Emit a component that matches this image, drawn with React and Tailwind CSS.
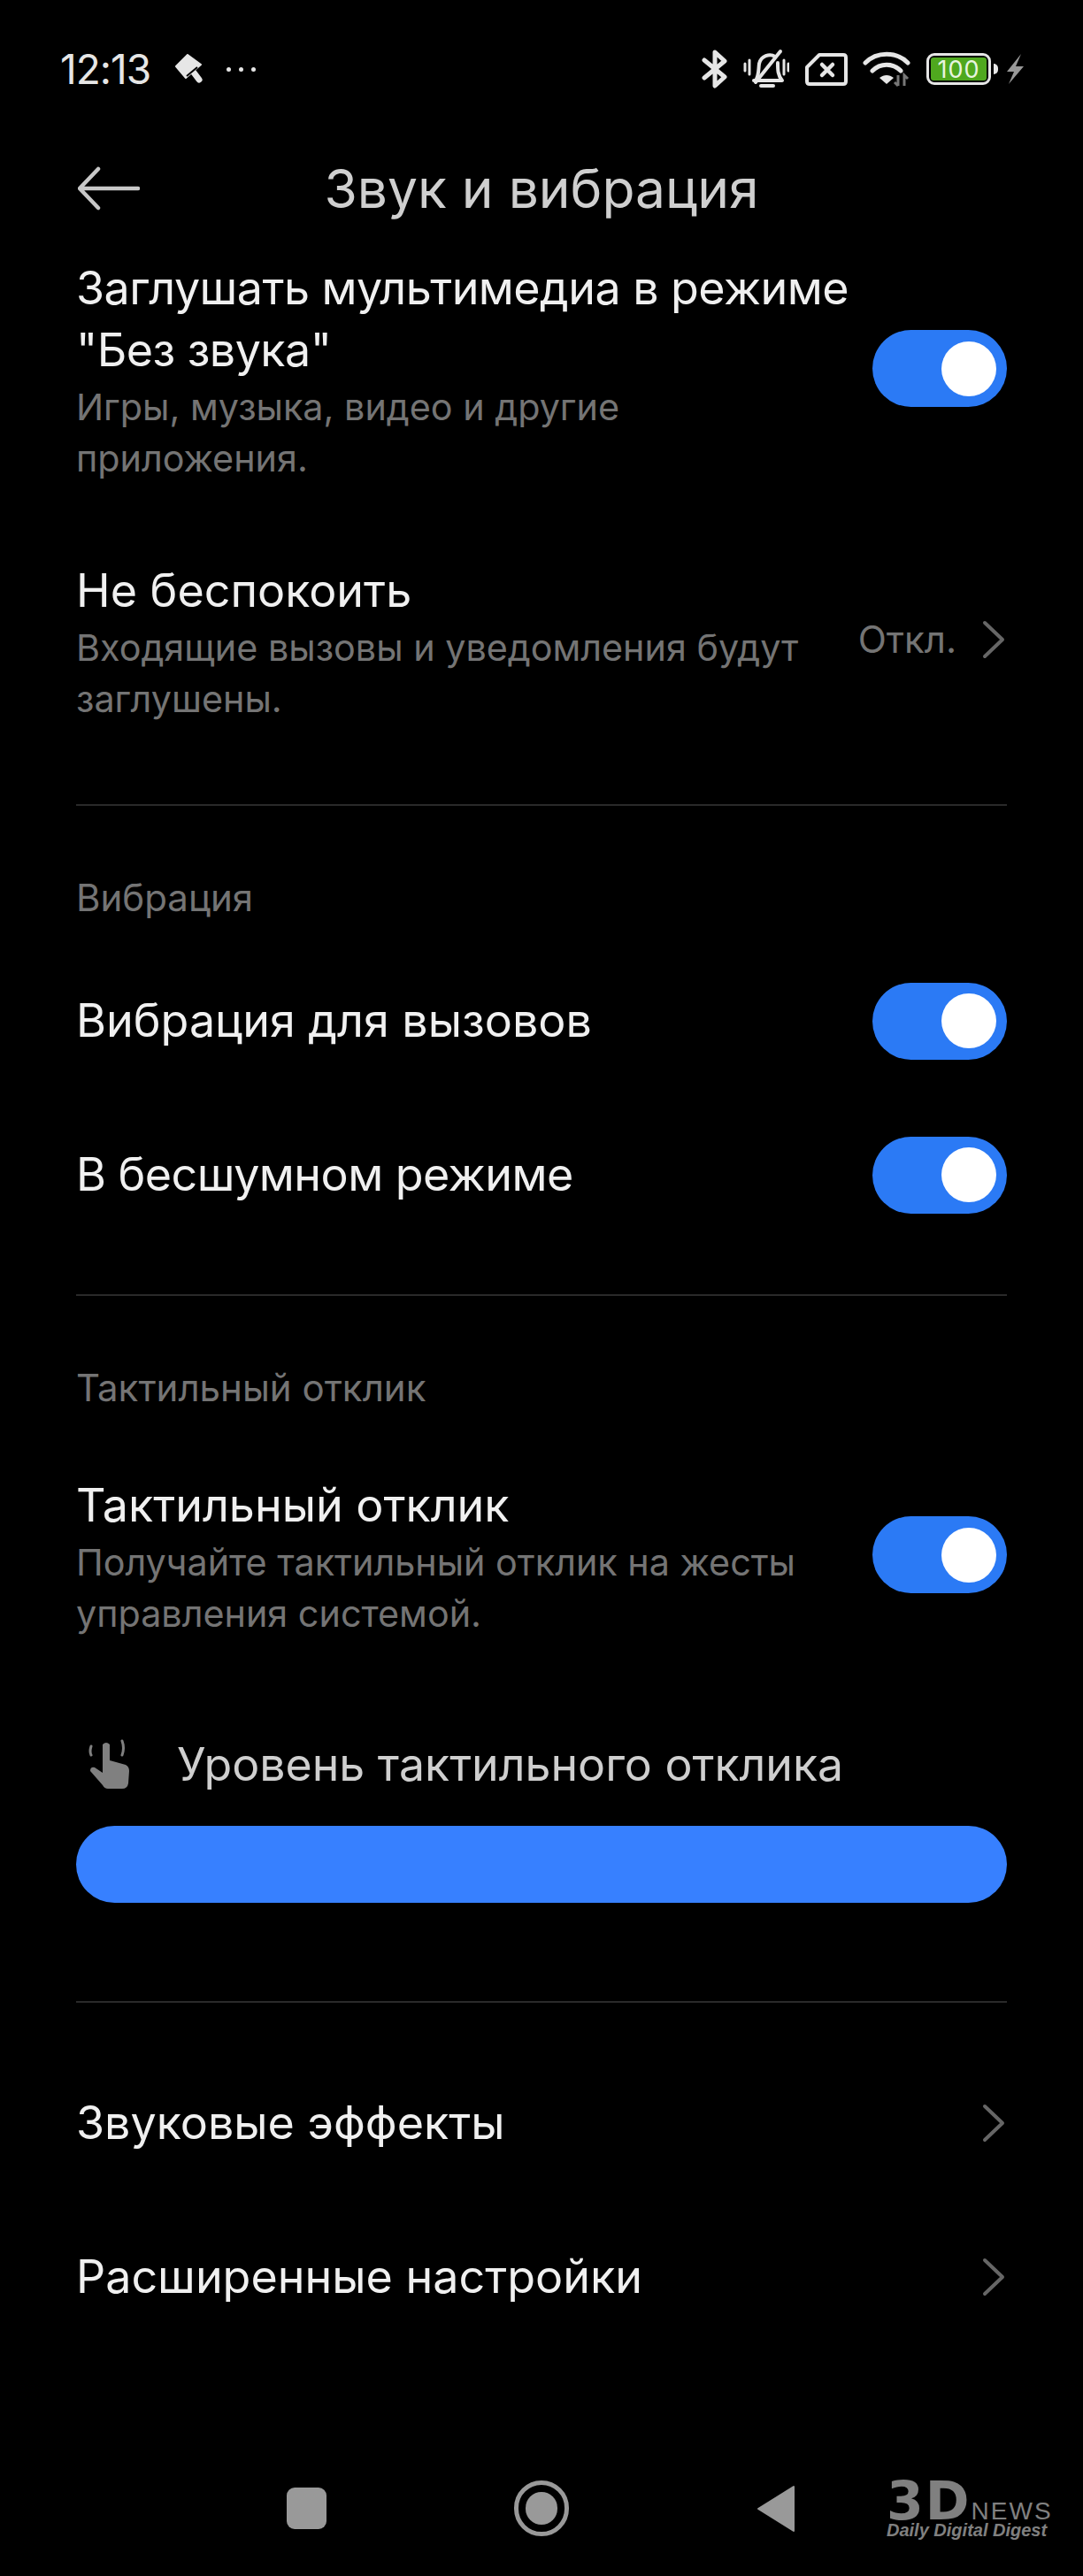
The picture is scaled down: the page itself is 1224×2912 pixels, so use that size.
const FONT = "font-['Inter','Noto_Sans',sans-serif]";

function Toggle() {
  return (
    <div className="flex h-[87px] w-[152px] shrink-0 items-center justify-end rounded-full bg-[#2b7af5] pr-[12px]">
      <div className="h-[62px] w-[62px] rounded-full bg-white" />
    </div>
  );
}

function Chevron() {
  return (
    <svg width="26" height="44" viewBox="0 0 26 44" fill="none" className="mr-[2px] shrink-0">
      <path d="M3 3 L23 22 L3 41" stroke="#666" strokeWidth="4" strokeLinecap="round" strokeLinejoin="round" />
    </svg>
  );
}

function Title({ tight, children }) {
  return (
    <div className={`whitespace-nowrap text-[52px] leading-[70px] text-[#f0f0f0] ${tight ? "tracking-[-0.55px]" : ""}`}>
      {children}
    </div>
  );
}

function Sub({ children }) {
  return <div className="text-[41.3px] leading-[58px] text-[#747474]">{children}</div>;
}

function Divider() {
  return <div className="h-[2px] bg-[#2a2a2a]" />;
}

function SectionLabel({ children }) {
  return <div className="mt-[53px] flex h-[100px] items-center text-[42px] text-[#747474]">{children}</div>;
}

function StatusIcons() {
  return (
    <div className="flex items-center">
      {/* bluetooth */}
      <svg width="30" height="46" viewBox="0 0 30 46" fill="none" className="mr-[17px]">
        <path d="M3 13 L26 32 L15 42 L15 4 L26 14 L3 33" stroke="#e6e6e6" strokeWidth="5" strokeLinecap="round" strokeLinejoin="round" />
      </svg>
      {/* muted bell */}
      <svg width="52" height="46" viewBox="0 0 52 46" fill="none" className="mr-[18px]">
        <path d="M14 36 C18 30 17 24 18 17 C20 8 30 5 36 9 M39 16 C39 24 39 30 44 36 L12 36" stroke="#e6e6e6" strokeWidth="4" strokeLinecap="round" strokeLinejoin="round" />
        <path d="M14 38 L42 3" stroke="#e6e6e6" strokeWidth="4" strokeLinecap="round" />
        <path d="M20 42 H34" stroke="#e6e6e6" strokeWidth="4" strokeLinecap="round" />
        <path d="M2 17 V25 M7 13 V29 M46 13 V29 M51 17 V25" stroke="#e6e6e6" strokeWidth="3" strokeLinecap="round" />
      </svg>
      {/* sim with cross */}
      <svg width="48" height="38" viewBox="0 0 48 38" fill="none" className="mr-[17px]">
        <path d="M2 17 L16 3 H43 Q46 3 46 6 V33 Q46 36 43 36 H5 Q2 36 2 33 Z" stroke="#e6e6e6" strokeWidth="4" strokeLinejoin="round" />
        <path d="M19 14 L31 26 M31 14 L19 26" stroke="#e6e6e6" strokeWidth="4.5" strokeLinecap="round" />
      </svg>
      {/* wifi */}
      <svg width="54" height="42" viewBox="0 0 54 42" fill="none" className="mr-[18px]">
        <path d="M3 14 C16 1 38 1 51 14" stroke="#e6e6e6" strokeWidth="5" strokeLinecap="round" />
        <path d="M11 23 C20 14 34 14 43 23" stroke="#e6e6e6" strokeWidth="5" strokeLinecap="round" />
        <path d="M19 31 C24 27 30 27 35 31 L27 38 Z" fill="#e6e6e6" />
        <path d="M40 28 V40 M47 40 V28 L51 32 M40 40 L36 36" stroke="#777" strokeWidth="3" />
      </svg>
      {/* battery */}
      <div className="mr-[3px] flex h-[36px] w-[73px] items-center rounded-[9px] border-[3px] border-[#e6e6e6] p-[2px]">
        <div className="flex h-full w-full items-center justify-center rounded-[3px] bg-[#4fa81e] text-[27px] leading-none tracking-[1px] text-[#e8f5e0]">100</div>
      </div>
      <div className="mr-[8px] h-[12px] w-[5px] rounded-r-full bg-[#e6e6e6]" />
      <svg width="22" height="34" viewBox="0 0 22 34" fill="none">
        <path d="M18 0 L2 20 H10 L4 34 L21 14 H12 Z" fill="#999" />
      </svg>
    </div>
  );
}

function NavLogo() {
  return (
    <div className="flex w-[186px] flex-col text-[#808080]">
      <div className="flex h-[44px] items-end leading-none">
        <span className="font-['DejaVu_Sans'] text-[60px] font-bold leading-[44px] tracking-[2px]">3D</span>
        <span className="font-['Liberation_Sans'] text-[28px] leading-[20px] tracking-[2px]">NEWS</span>
      </div>
      <div className="mt-[4px] whitespace-nowrap font-['Liberation_Sans'] text-[20px] font-bold italic leading-[14px]">Daily Digital Digest</div>
    </div>
  );
}

export default function App() {
  return (
    <div className={`h-[2912px] w-[1224px] overflow-hidden bg-black ${FONT}`}>
      {/* Status bar */}
      <div className="flex h-[156px] items-center justify-between pl-[68px] pr-[66px]">
        <div className="flex items-center">
          <span className="text-[46px] leading-none tracking-[-1px] text-[#e6e6e6]">12:13</span>
          <svg width="32" height="34" viewBox="0 0 32 34" fill="none" className="ml-[28px]">
            <path d="M1 14 L14 1 L29 12 L12 27 Z" fill="#e6e6e6" stroke="#e6e6e6" strokeWidth="2" strokeLinejoin="round" />
            <path d="M21 21 L27 29" stroke="#e6e6e6" strokeWidth="7" strokeLinecap="round" />
            <path d="M13 25 L25 15" stroke="#000" strokeWidth="2" />
          </svg>
          <div className="ml-[26px] flex gap-[9px]">
            <div className="h-[5px] w-[5px] rounded-full bg-[#e6e6e6]" />
            <div className="h-[5px] w-[5px] rounded-full bg-[#e6e6e6]" />
            <div className="h-[5px] w-[5px] rounded-full bg-[#e6e6e6]" />
          </div>
        </div>
        <StatusIcons />
      </div>

      {/* Header */}
      <div className="relative flex h-[114px] items-center justify-center">
        <svg width="70" height="50" viewBox="0 0 70 50" fill="none" className="absolute left-[88px] top-[32px]">
          <path d="M23 3 L2 25 L23 47 M3 25 H68" stroke="#c8c8c8" strokeWidth="4.5" strokeLinecap="round" strokeLinejoin="round" />
        </svg>
        <h1 className="text-[60.5px] font-normal leading-none text-[#cfcfcf]">Звук и вибрация</h1>
      </div>

      <div className="px-[86px]">
        {/* Mute media */}
        <div className="flex h-[327px] items-start justify-between pt-[21px]">
          <div className="w-[860px]">
            <Title tight>Заглушать мультимедиа в режиме<br />"Без звука"</Title>
            <Sub>Игры, музыка, видео и другие приложения.</Sub>
          </div>
          <div className="mt-[82px]"><Toggle /></div>
        </div>

        {/* DND */}
        <div className="flex h-[312px] items-start justify-between pt-[36px]">
          <div className="w-[860px]">
            <Title>Не беспокоить</Title>
            <Sub>Входящие вызовы и уведомления будут заглушены.</Sub>
          </div>
          <div className="mt-[68px] flex items-center gap-[29px]">
            <span className="text-[42px] leading-none text-[#747474]">Откл.</span>
            <Chevron />
          </div>
        </div>

        <Divider />
        <SectionLabel>Вибрация</SectionLabel>

        <div className="mt-[3px] flex h-[174px] items-center justify-between"><Title>Вибрация для вызовов</Title><Toggle /></div>
        <div className="flex h-[174px] items-center justify-between"><Title tight>В бесшумном режиме</Title><Toggle /></div>

        <div className="mt-[48px]"><Divider /></div>
        <SectionLabel>Тактильный отклик</SectionLabel>

        {/* Haptic */}
        <div className="mt-[18px] flex h-[295px] items-start justify-between pt-[31px]">
          <div className="w-[860px]">
            <Title>Тактильный отклик</Title>
            <Sub>Получайте тактильный отклик на жесты управления системой.</Sub>
          </div>
          <div className="mt-[47px]"><Toggle /></div>
        </div>

        {/* Haptic level */}
        <div className="mt-[29px] flex h-[70px] items-center">
          <svg width="48" height="58" viewBox="0 0 48 58" fill="none" className="ml-[14px] mr-[52px]">
            <path d="M3 8 Q1 14 3 18 M38 2 Q41 10 38 18" stroke="#808080" strokeWidth="3" strokeLinecap="round" />
            <path d="M16 6 Q20 2 24 6 V24 L42 29 Q46 31 46 36 L45 50 Q44 56 38 56 H22 Q18 56 16 52 L2 36 Q2 31 7 32 L16 38 Z" fill="#808080" />
          </svg>
          <span className="text-[51.8px] leading-none text-[#cfcfcf]">Уровень тактильного отклика</span>
        </div>
        <div className="mt-[34px] h-[87px] rounded-full bg-[#3780ff]" />

        <div className="mt-[111px]"><Divider /></div>

        <div className="mt-[49px] flex h-[174px] items-center justify-between"><Title>Звуковые эффекты</Title><Chevron /></div>
        <div className="flex h-[174px] items-center justify-between"><Title>Расширенные настройки</Title><Chevron /></div>
      </div>

      {/* Nav bar */}
      <div className="mt-[143px] flex items-center pl-[324px]">
        <div className="h-[47px] w-[45px] rounded-[9px] bg-[#999]" />
        <div className="ml-[212px] flex h-[63px] w-[62px] items-center justify-center rounded-full border-[5px] border-[#999]">
          <div className="h-[37px] w-[36px] rounded-full bg-[#999]" />
        </div>
        <svg width="44" height="54" viewBox="0 0 44 54" fill="none" className="ml-[212px]">
          <path d="M2 27 L42 2 V52 Z" fill="#999" stroke="#999" strokeWidth="2" strokeLinejoin="round" />
        </svg>
        <div className="ml-[103px]"><NavLogo /></div>
      </div>
    </div>
  );
}
